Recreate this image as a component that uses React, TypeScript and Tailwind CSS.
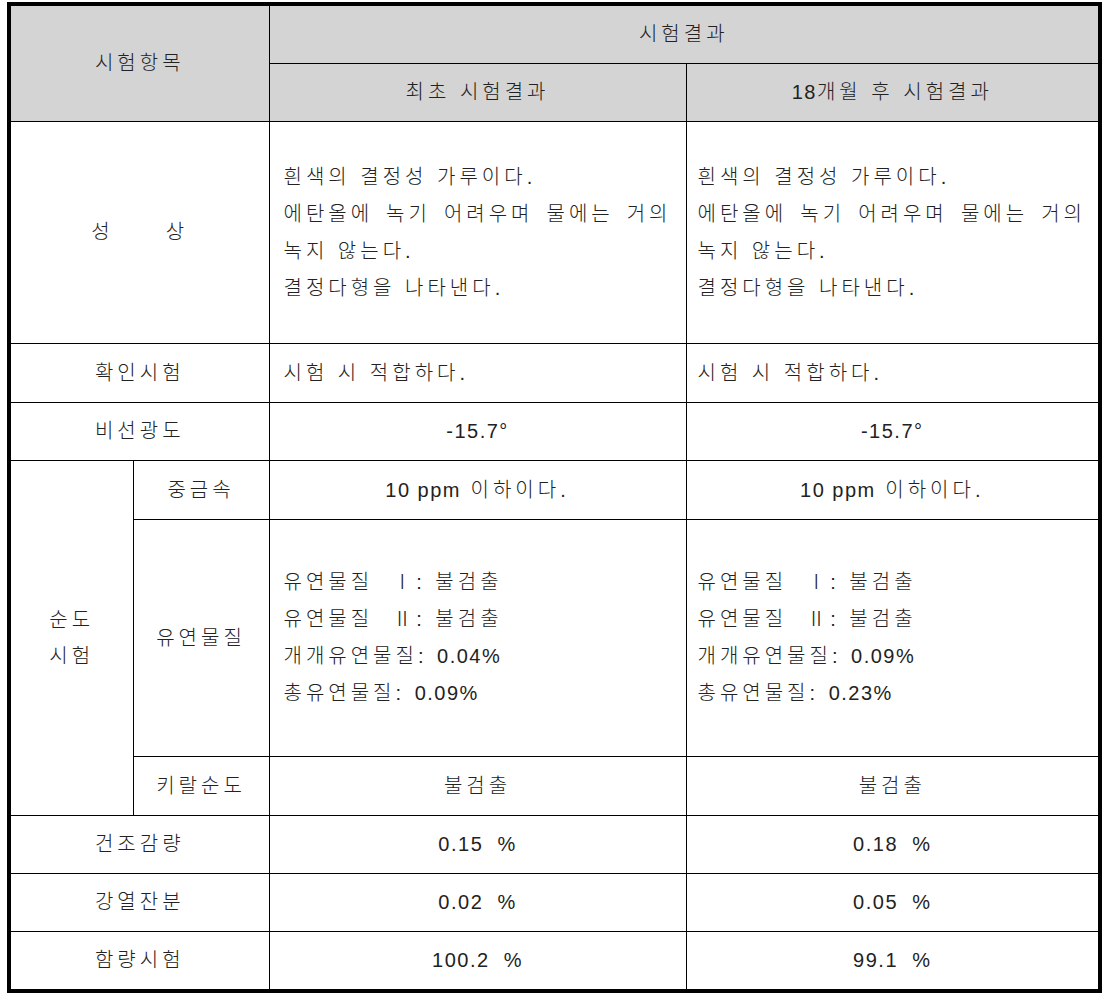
import React from "react";

const cell = "border border-black align-middle";

const N = ({ children }: { children: React.ReactNode }) => (
  <span className="tracking-[1.5px]">{children}</span>
);

const Desc = () => (
  <div className="flex flex-col gap-[13px] leading-[24px]">
    <div>흰색의 결정성 가루이다.</div>
    <div className="flex justify-between whitespace-nowrap">
      <span>에탄올에</span>
      <span>녹기</span>
      <span>어려우며</span>
      <span>물에는</span>
      <span>거의</span>
    </div>
    <div>녹지 않는다.</div>
    <div>결정다형을 나타낸다.</div>
  </div>
);

const Impurity = ({ each, total }: { each: string; total: string }) => (
  <div className="flex flex-col gap-[13px] leading-[24px]">
    <div>유연물질&nbsp; Ⅰ: 불검출</div>
    <div>유연물질&nbsp; Ⅱ: 불검출</div>
    <div>개개유연물질: <N>{each}</N></div>
    <div>총유연물질: <N>{total}</N></div>
  </div>
);

const App = () => {
  const simple = [
    { name: "건조감량", a: "0.15  %", b: "0.18  %" },
    { name: "강열잔분", a: "0.02  %", b: "0.05  %" },
    { name: "함량시험", a: "100.2  %", b: "99.1  %" },
  ];

  return (
    <div className="w-[1110px] h-[998px] bg-white pt-[2px] pl-[7px]">
      <div
        className="w-[1095px] border-4 border-black text-[20px] text-[#222] tracking-[4px] font-light"
        style={{ fontFamily: '"Liberation Sans", "Noto Sans CJK KR", sans-serif' }}
      >
        <table className="w-full table-fixed border-collapse border-hidden text-center">
          <colgroup>
            <col className="w-[122px]" />
            <col className="w-[136px]" />
            <col className="w-[417px]" />
            <col />
          </colgroup>
          <tbody>
            <tr className="h-[57px] bg-[#d4d4d4]">
              <td colSpan={2} rowSpan={2} className={cell}>시험항목</td>
              <td colSpan={2} className={cell}>시험결과</td>
            </tr>
            <tr className="h-[58px] bg-[#d4d4d4]">
              <td className={cell}>최초 시험결과</td>
              <td className={cell}><N>18</N>개월 후 시험결과</td>
            </tr>
            <tr className="h-[222px]">
              <td colSpan={2} className={cell}>
                <div className="flex justify-center gap-[52px]">
                  <span>성</span>
                  <span>상</span>
                </div>
              </td>
              <td className={`${cell} text-left px-[14px]`}><Desc /></td>
              <td className={`${cell} text-left pl-[11px] pr-[12px]`}><Desc /></td>
            </tr>
            <tr className="h-[59px]">
              <td colSpan={2} className={cell}>확인시험</td>
              <td className={`${cell} text-left px-[14px]`}>시험 시 적합하다.</td>
              <td className={`${cell} text-left px-[11px]`}>시험 시 적합하다.</td>
            </tr>
            <tr className="h-[58px]">
              <td colSpan={2} className={cell}>비선광도</td>
              <td className={`${cell} tracking-[1.5px]`}>-15.7°</td>
              <td className={`${cell} tracking-[1.5px]`}>-15.7°</td>
            </tr>
            <tr className="h-[59px]">
              <td rowSpan={3} className={`${cell} leading-[36px]`}>
                순도<br />시험
              </td>
              <td className={cell}>중금속</td>
              <td className={cell}><N>10 ppm</N> 이하이다.</td>
              <td className={cell}><N>10 ppm</N> 이하이다.</td>
            </tr>
            <tr className="h-[237px]">
              <td className={cell}>유연물질</td>
              <td className={`${cell} text-left px-[14px]`}><Impurity each="0.04%" total="0.09%" /></td>
              <td className={`${cell} text-left px-[11px]`}><Impurity each="0.09%" total="0.23%" /></td>
            </tr>
            <tr className="h-[59px]">
              <td className={cell}>키랄순도</td>
              <td className={cell}>불검출</td>
              <td className={cell}>불검출</td>
            </tr>
            {simple.map((row) => (
              <tr key={row.name} className="h-[58px]">
                <td colSpan={2} className={cell}>{row.name}</td>
                <td className={`${cell} whitespace-pre tracking-[1.5px]`}>{row.a}</td>
                <td className={`${cell} whitespace-pre tracking-[1.5px]`}>{row.b}</td>
              </tr>
            ))}
          </tbody>
        </table>
      </div>
    </div>
  );
};

export default App;
